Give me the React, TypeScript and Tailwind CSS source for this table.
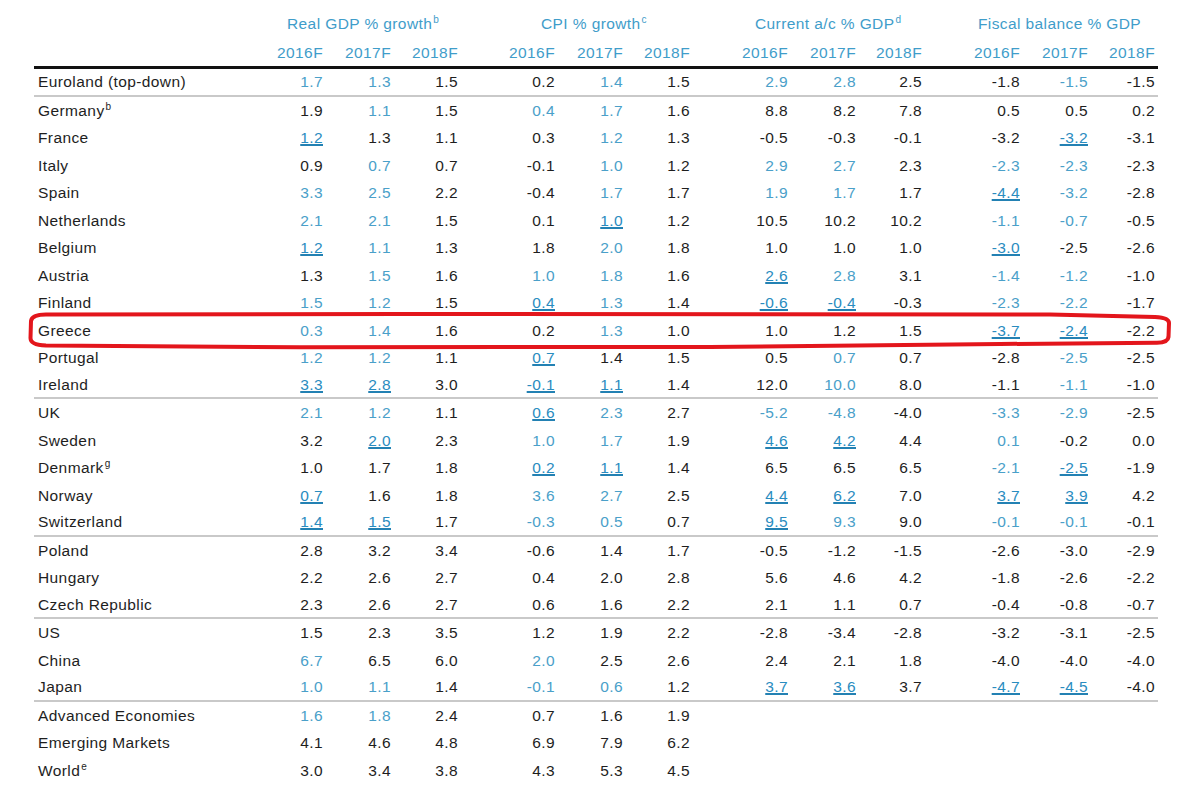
import React from "react";

type Row = { label: string; sup?: string; vals: string[]; sep?: boolean };

const rows: Row[] = [
  { label: "Euroland (top-down)", vals: ["1.7b", "1.3b", "1.5", "0.2", "1.4b", "1.5", "2.9b", "2.8b", "2.5", "-1.8", "-1.5b", "-1.5"], sep: true },
  { label: "Germany", sup: "b", vals: ["1.9", "1.1b", "1.5", "0.4b", "1.7b", "1.6", "8.8", "8.2", "7.8", "0.5", "0.5", "0.2"] },
  { label: "France", vals: ["1.2u", "1.3", "1.1", "0.3", "1.2b", "1.3", "-0.5", "-0.3", "-0.1", "-3.2", "-3.2u", "-3.1"] },
  { label: "Italy", vals: ["0.9", "0.7b", "0.7", "-0.1", "1.0b", "1.2", "2.9b", "2.7b", "2.3", "-2.3b", "-2.3b", "-2.3"] },
  { label: "Spain", vals: ["3.3b", "2.5b", "2.2", "-0.4", "1.7b", "1.7", "1.9b", "1.7b", "1.7", "-4.4u", "-3.2b", "-2.8"] },
  { label: "Netherlands", vals: ["2.1b", "2.1b", "1.5", "0.1", "1.0u", "1.2", "10.5", "10.2", "10.2", "-1.1b", "-0.7b", "-0.5"] },
  { label: "Belgium", vals: ["1.2u", "1.1b", "1.3", "1.8", "2.0b", "1.8", "1.0", "1.0", "1.0", "-3.0u", "-2.5", "-2.6"] },
  { label: "Austria", vals: ["1.3", "1.5b", "1.6", "1.0b", "1.8b", "1.6", "2.6u", "2.8b", "3.1", "-1.4b", "-1.2b", "-1.0"] },
  { label: "Finland", vals: ["1.5b", "1.2b", "1.5", "0.4u", "1.3b", "1.4", "-0.6u", "-0.4u", "-0.3", "-2.3b", "-2.2b", "-1.7"] },
  { label: "Greece", vals: ["0.3b", "1.4b", "1.6", "0.2", "1.3b", "1.0", "1.0", "1.2", "1.5", "-3.7u", "-2.4u", "-2.2"] },
  { label: "Portugal", vals: ["1.2b", "1.2b", "1.1", "0.7u", "1.4", "1.5", "0.5", "0.7b", "0.7", "-2.8", "-2.5b", "-2.5"] },
  { label: "Ireland", vals: ["3.3u", "2.8u", "3.0", "-0.1u", "1.1u", "1.4", "12.0", "10.0b", "8.0", "-1.1", "-1.1b", "-1.0"], sep: true },
  { label: "UK", vals: ["2.1b", "1.2b", "1.1", "0.6u", "2.3b", "2.7", "-5.2b", "-4.8b", "-4.0", "-3.3b", "-2.9b", "-2.5"] },
  { label: "Sweden", vals: ["3.2", "2.0u", "2.3", "1.0b", "1.7b", "1.9", "4.6u", "4.2u", "4.4", "0.1b", "-0.2", "0.0"] },
  { label: "Denmark", sup: "g", vals: ["1.0", "1.7", "1.8", "0.2u", "1.1u", "1.4", "6.5", "6.5", "6.5", "-2.1b", "-2.5u", "-1.9"] },
  { label: "Norway", vals: ["0.7u", "1.6", "1.8", "3.6b", "2.7b", "2.5", "4.4u", "6.2u", "7.0", "3.7u", "3.9u", "4.2"] },
  { label: "Switzerland", vals: ["1.4u", "1.5u", "1.7", "-0.3b", "0.5b", "0.7", "9.5u", "9.3b", "9.0", "-0.1b", "-0.1b", "-0.1"], sep: true },
  { label: "Poland", vals: ["2.8", "3.2", "3.4", "-0.6", "1.4", "1.7", "-0.5", "-1.2", "-1.5", "-2.6", "-3.0", "-2.9"] },
  { label: "Hungary", vals: ["2.2", "2.6", "2.7", "0.4", "2.0", "2.8", "5.6", "4.6", "4.2", "-1.8", "-2.6", "-2.2"] },
  { label: "Czech Republic", vals: ["2.3", "2.6", "2.7", "0.6", "1.6", "2.2", "2.1", "1.1", "0.7", "-0.4", "-0.8", "-0.7"], sep: true },
  { label: "US", vals: ["1.5", "2.3", "3.5", "1.2", "1.9", "2.2", "-2.8", "-3.4", "-2.8", "-3.2", "-3.1", "-2.5"] },
  { label: "China", vals: ["6.7b", "6.5", "6.0", "2.0b", "2.5", "2.6", "2.4", "2.1", "1.8", "-4.0", "-4.0", "-4.0"] },
  { label: "Japan", vals: ["1.0b", "1.1b", "1.4", "-0.1b", "0.6b", "1.2", "3.7u", "3.6u", "3.7", "-4.7u", "-4.5u", "-4.0"], sep: true },
  { label: "Advanced Economies", vals: ["1.6b", "1.8b", "2.4", "0.7", "1.6", "1.9", "", "", "", "", "", ""] },
  { label: "Emerging Markets", vals: ["4.1", "4.6", "4.8", "6.9", "7.9", "6.2", "", "", "", "", "", ""] },
  { label: "World", sup: "e", vals: ["3.0", "3.4", "3.8", "4.3", "5.3", "4.5", "", "", "", "", "", ""] },
];

const GRID =
  "grid grid-cols-[222px_67px_68px_67px_97px_68px_67px_98px_68px_66px_98px_68px_67px] items-center";

function Cell({ v }: { v: string }) {
  if (!v) return <div />;
  const tag = v.slice(-1);
  if (tag === "b") {
    return (
      <div className="text-right">
        <span className="text-[#4aa0c9]">{v.slice(0, -1)}</span>
      </div>
    );
  }
  if (tag === "u") {
    return (
      <div className="text-right">
        <span className="text-[#2a8cbf] underline decoration-2 underline-offset-[1px] decoration-[#2381b3]">
          {v.slice(0, -1)}
        </span>
      </div>
    );
  }
  return (
    <div className="text-right">
      <span className="text-[#1e1e1e]">{v}</span>
    </div>
  );
}

function Sup({ c }: { c: string }) {
  return <span className="relative -top-[6px] text-[10px] ml-[1px]">{c}</span>;
}

const years = ["2016F", "2017F", "2018F"];

export default function App() {
  return (
    <div className="relative w-[1200px] h-[792px] bg-white overflow-hidden font-['Liberation_Sans',Arial,sans-serif] text-[15.5px] tracking-[0.4px] leading-normal">
      <div className="ml-[34px] w-[1124px] pt-[9px]">
        {/* group titles */}
        <div className={`${GRID} h-[30px] text-[#3f9dca]`}>
          <div />
          <div className="col-span-3 pl-[31px] whitespace-nowrap">
            Real GDP % growth<Sup c="b" />
          </div>
          <div className="col-span-3 pl-[83px] whitespace-nowrap">
            CPI % growth<Sup c="c" />
          </div>
          <div className="col-span-3 pl-[65px] whitespace-nowrap">
            Current a/c % GDP<Sup c="d" />
          </div>
          <div className="col-span-3 pl-[56px] whitespace-nowrap">Fiscal balance % GDP</div>
        </div>
        {/* years */}
        <div className={`${GRID} h-[30px] border-b-[3px] border-[#111] text-[#3f9dca]`}>
          <div />
          {[0, 1, 2, 3].map((g) =>
            years.map((y) => (
              <div key={`${g}-${y}`} className="text-right">
                {y}
              </div>
            ))
          )}
        </div>
        {/* rows */}
        {rows.map((r) => (
          <div
            key={r.label}
            className={`${GRID} h-[27.5px] ${r.sep ? "border-b-2 border-[#c9c9c9]" : ""}`}
          >
            <div className="pl-[4px] text-[#1e1e1e] whitespace-nowrap">
              {r.label}
              {r.sup ? <Sup c={r.sup} /> : null}
            </div>
            {r.vals.map((v, i) => (
              <Cell key={i} v={v} />
            ))}
          </div>
        ))}
      </div>
      {/* hand-drawn highlight around Greece */}
      <svg
        className="absolute left-0 top-0 pointer-events-none"
        width="1200"
        height="792"
        viewBox="0 0 1200 792"
      >
        <path
          d="M 31 321 Q 32 314.5 46 314.5 L 400 314 L 1050 314.5 L 1155 317 Q 1169 317.5 1169 323 L 1168.5 337 Q 1168 342.5 1157 342.8 L 1000 344 L 710 347 L 300 347.2 L 46 345.5 Q 30.5 345 30.5 338 Z"
          fill="none"
          stroke="#e3161c"
          strokeWidth="4"
          strokeLinejoin="round"
        />
      </svg>
    </div>
  );
}
